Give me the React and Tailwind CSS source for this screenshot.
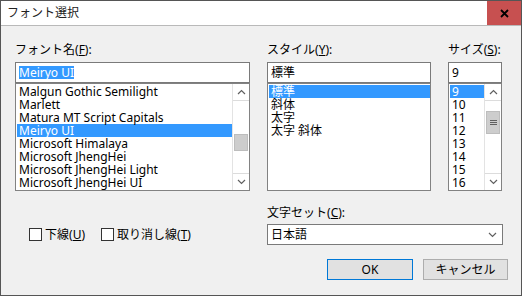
import React from 'react';

const fonts = [
  'Malgun Gothic Semilight',
  'Marlett',
  'Matura MT Script Capitals',
  'Meiryo UI',
  'Microsoft Himalaya',
  'Microsoft JhengHei',
  'Microsoft JhengHei Light',
  'Microsoft JhengHei UI',
];
const styles = ['標準', '斜体', '太字', '太字 斜体'];
const sizes = ['9', '10', '11', '12', '13', '14', '15', '16'];

const Chevron = ({ up }) => (
  <svg width="9" height="6" viewBox="0 0 9 6">
    <polyline
      points={up ? '1,5 4.5,1.5 8,5' : '1,1 4.5,4.5 8,1'}
      fill="none"
      stroke="#606060"
      strokeWidth="1.2"
    />
  </svg>
);

// mnemonic label like "フォント名(F):"
const Label = ({ text, k, className = '' }) => (
  <div className={`h-[16px] leading-[16px] text-[12px] ${className}`}>
    {text}(<span className="underline">{k}</span>):
  </div>
);

const ScrollBar = ({ thumbTop, thumbH, grip }) => (
  <div className="w-[17px] h-full flex flex-col bg-white border-l border-[#e3e3e3]">
    <div className="h-[17px] flex items-center justify-center border-b border-[#dcdcdc]">
      <Chevron up />
    </div>
    <div className="flex-1">
      <div
        className={`mx-[1px] flex items-center justify-center bg-[#cdcdcd] border border-[#bdbdbd] ${thumbTop} ${thumbH}`}
      >
        {grip && (
          <svg width="7" height="7" viewBox="0 0 7 7">
            <path d="M0 1.5h7M0 3.5h7M0 5.5h7" stroke="#606060" strokeWidth="1" />
          </svg>
        )}
      </div>
    </div>
    <div className="h-[17px] flex items-center justify-center border-t border-[#dcdcdc]">
      <Chevron />
    </div>
  </div>
);

const ListBox = ({ items, selected, scroll, width }) => (
  <div className={`${width} h-[108px] border border-[#828282] bg-white flex`}>
    <div className="flex-1 py-[1px] pl-[1px] overflow-hidden">
      {items.map((it) => (
        <div
          key={it}
          className={`h-[13px] leading-[13px] text-[12px] pl-[2px] whitespace-nowrap ${
            it === selected ? 'bg-[#3399ff] text-white' : 'text-black'
          }`}
        >
          {it}
        </div>
      ))}
    </div>
    {scroll}
  </div>
);

const TextBox = ({ children }) => (
  <div className="h-[21px] border border-[#7a7a7a] bg-white pl-[3px] flex items-center text-[12px]">
    {children}
  </div>
);

const CheckBox = ({ text, k }) => (
  <div className="flex items-center gap-[3px] text-[12px]">
    <div className="w-[13px] h-[13px] border border-[#333333] bg-white" />
    <span>
      {text}(<span className="underline">{k}</span>)
    </span>
  </div>
);

export default function App() {
  return (
    <div className="w-[522px] h-[296px] border border-[#555555] flex flex-col text-black font-['Noto_Sans','Noto_Sans_CJK_JP',sans-serif]">
      {/* title bar */}
      <div className="h-[25px] bg-white border-b border-[#b9b9b9] flex items-stretch">
        <div className="flex-1 pl-[6px] flex items-center text-[12px] text-[#222222]">フォント選択</div>
        <div className="w-[34px] h-[24px] bg-[#c75050] flex items-center justify-center">
          <svg width="9" height="9" viewBox="0 0 9 9">
            <path d="M1 1L8 8M8 1L1 8" stroke="#000" strokeWidth="1.8" />
          </svg>
        </div>
      </div>

      {/* body */}
      <div className="flex-1 bg-[#f0f0f0] pl-[14px] pt-[16px] flex flex-col">
        <div className="flex gap-[17px]">
          <div className="w-[235px] flex flex-col">
            <Label text="フォント名" k="F" className="mb-[4px]" />
            <TextBox>
              <span className="bg-[#3399ff] text-white leading-[13px]">Meiryo UI</span>
            </TextBox>
            <ListBox
              width="w-[235px]"
              items={fonts}
              selected="Meiryo UI"
              scroll={<ScrollBar thumbTop="mt-[33px]" thumbH="h-[17px]" />}
            />
          </div>
          <div className="w-[164px] flex flex-col">
            <Label text="スタイル" k="Y" className="mb-[4px]" />
            <TextBox>標準</TextBox>
            <ListBox width="w-[164px]" items={styles} selected="標準" />
          </div>
          <div className="w-[54px] flex flex-col">
            <Label text="サイズ" k="S" className="mb-[4px]" />
            <TextBox>9</TextBox>
            <ListBox
              width="w-[54px]"
              items={sizes}
              selected="9"
              scroll={<ScrollBar thumbTop="mt-[10px]" thumbH="h-[23px]" grip />}
            />
          </div>
        </div>

        <div className="flex items-end mt-[14px]">
          <div className="w-[252px] h-[21px] flex items-center gap-[16px] pl-[14px]">
            <CheckBox text="下線" k="U" />
            <CheckBox text="取り消し線" k="T" />
          </div>
          <div className="w-[236px] flex flex-col">
            <Label text="文字セット" k="C" className="mb-[3px]" />
            <div className="h-[21px] border border-[#7a7a7a] bg-white pl-[3px] pr-[5px] flex items-center justify-between text-[12px]">
              <span>日本語</span>
              <Chevron />
            </div>
          </div>
        </div>

        <div className="flex justify-end gap-[10px] pr-[13px] mt-[14px]">
          <button className="w-[86px] h-[21px] bg-[#e1e1e1] border border-[#0078d7] text-[12px] flex items-center justify-center">
            OK
          </button>
          <button className="w-[85px] h-[21px] bg-[#e1e1e1] border border-[#adadad] text-[12px] flex items-center justify-center">
            キャンセル
          </button>
        </div>
      </div>
    </div>
  );
}
